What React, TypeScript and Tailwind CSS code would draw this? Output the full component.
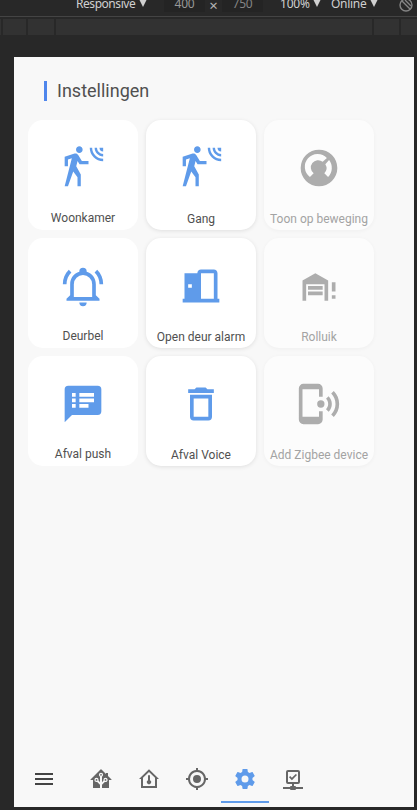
import React from "react";

const walk =
  "M10,0.2C9,0.2 8.2,1 8.2,2C8.2,3 9,3.8 10,3.8C11,3.8 11.8,3 11.8,2C11.8,1 11,0.2 10,0.2M15.67,1A7.33,7.33 0 0,0 23,8.33V7A6,6 0 0,1 17,1H15.67M18.33,1C18.33,3.58 20.42,5.67 23,5.67V4.33C21.16,4.33 19.67,2.84 19.67,1H18.33M21,1A2,2 0 0,0 23,3V1H21M7.92,4.03C7.75,4.03 7.58,4.06 7.42,4.11L2,5.8V11H3.8V7.33L5.91,6.67L2,22H3.8L6.67,13.89L9,17V22H10.8V15.59L8.31,11.05L9.04,8.18L10.12,10H15V8.2H11.38L9.38,4.87C9.08,4.37 8.54,4.03 7.92,4.03Z";
const gauge =
  "M12,2A10,10 0 1,0 12,22A10,10 0 1,0 12,2M7.05,16.95A7,7 0 1,1 16.3,6.5L14,8.55A4,4 0 0,0 9.1,14.9L7.05,16.95M16.95,16.95L14.9,14.9A4,4 0 0,0 15.45,10L17.5,7.7A7,7 0 0,1 16.95,16.95Z";
const bell =
  "M10,21H14A2,2 0 0,1 12,23A2,2 0 0,1 10,21M21,19V20H3V19L5,17V11C5,7.9 7.03,5.17 10,4.29C10,4.19 10,4.1 10,4A2,2 0 0,1 12,2A2,2 0 0,1 14,4C14,4.1 14,4.19 14,4.29C16.97,5.17 19,7.9 19,11V17L21,19M17,11A5,5 0 0,0 12,6A5,5 0 0,0 7,11V18H17V11M19.75,3.19L18.33,4.61C20.04,6.3 21,8.6 21,11H23C23,8.07 21.84,5.25 19.75,3.19M1,11H3C3,8.6 3.96,6.3 5.67,4.61L4.25,3.19C2.16,5.25 1,8.07 1,11Z";
const door =
  "M12,3C10.89,3 10,3.89 10,5H3V19H2V21H22V19H21V5C21,3.89 20.11,3 19,3H12M12,5H19V19H12V5M5,11H7V13H5V11Z";
const garage =
  "M17,20H15V11H5V20H3V9L10,5L17,9V20M6,12H14V14H6V12M6,15H14V17H6V15M19,15V10H21V15H19M19,19V17H21V19H19Z";
const message =
  "M20,2H4A2,2 0 0,0 2,4V22L6,18H20A2,2 0 0,0 22,16V4A2,2 0 0,0 20,2M8,14H6V12H8V14M8,11H6V9H8V11M8,8H6V6H8V8M15,14H10V12H15V14M18,11H10V9H18V11M18,8H10V6H18V8Z";
const trash =
  "M6,19A2,2 0 0,0 8,21H16A2,2 0 0,0 18,19V7H6V19M8,9H16V19H8V9M15.5,4L14.5,3H9.5L8.5,4H5V6H19V4H15.5Z";
const phone =
  "M20.07,4.93C21.88,6.74 23,9.24 23,12C23,14.76 21.88,17.26 20.07,19.07L18.66,17.66C20.11,16.22 21,14.22 21,12C21,9.79 20.11,7.78 18.66,6.34L20.07,4.93M17.24,7.76C18.33,8.85 19,10.35 19,12C19,13.65 18.33,15.15 17.24,16.24L15.83,14.83C16.55,14.11 17,13.11 17,12C17,10.89 16.55,9.89 15.83,9.17L17.24,7.76M13,10A2,2 0 0,1 15,12A2,2 0 0,1 13,14A2,2 0 0,1 11,12A2,2 0 0,1 13,10M11.5,1A2.5,2.5 0 0,1 14,3.5V8H12V4H3V19H12V16H14V20.5A2.5,2.5 0 0,1 11.5,23H3.5A2.5,2.5 0 0,1 1,20.5V3.5A2.5,2.5 0 0,1 3.5,1H11.5Z";

const menu = "M3,6H21V8H3V6M3,11H21V13H3V11M3,16H21V18H3V16Z";
const homeAssistant =
  "M21.8,13H20V21H13V17.67L15.79,14.88L16.5,15C17.66,15 18.6,14.06 18.6,12.9C18.6,11.74 17.66,10.8 16.5,10.8A2.1,2.1 0 0,0 14.4,12.9L14.5,13.61L13,15.13V9.65C13.66,9.29 14.1,8.6 14.1,7.8A2.1,2.1 0 0,0 12,5.7A2.1,2.1 0 0,0 9.9,7.8C9.9,8.6 10.34,9.29 11,9.65V15.13L9.5,13.61L9.6,12.9A2.1,2.1 0 0,0 7.5,10.8A2.1,2.1 0 0,0 5.4,12.9A2.1,2.1 0 0,0 7.5,15L8.21,14.88L11,17.67V21H4V13H2.25C1.83,13 1.42,13 1.42,12.79C1.43,12.57 1.85,12.15 2.28,11.72L11,3C11.33,2.67 11.67,2.33 12,2.33C12.33,2.33 12.67,2.67 13,3L17,7V6H19V9L21.78,11.78C22.18,12.18 22.59,12.59 22.6,12.8C22.6,13 22.2,13 21.8,13M7.5,12A0.9,0.9 0 0,1 8.4,12.9A0.9,0.9 0 0,1 7.5,13.8A0.9,0.9 0 0,1 6.6,12.9A0.9,0.9 0 0,1 7.5,12M16.5,12C17,12 17.4,12.4 17.4,12.9C17.4,13.4 17,13.8 16.5,13.8A0.9,0.9 0 0,1 15.6,12.9A0.9,0.9 0 0,1 16.5,12M12,6.9C12.5,6.9 12.9,7.3 12.9,7.8C12.9,8.3 12.5,8.7 12,8.7C11.5,8.7 11.1,8.3 11.1,7.8C11.1,7.3 11.5,6.9 12,6.9Z";
const homeThermometer =
  "M12,2.3L2,12H4V21H20V12H22L12,2.3M12,5L18,10.8V19H6V10.8L12,5M12,8A1,1 0 0,0 11,9V13.2A2.1,2.1 0 1,0 13,13.2V9A1,1 0 0,0 12,8Z";
const crosshairs =
  "M12,8A4,4 0 0,1 16,12A4,4 0 0,1 12,16A4,4 0 0,1 8,12A4,4 0 0,1 12,8M3.05,13H1V11H3.05C3.5,6.83 6.83,3.5 11,3.05V1H13V3.05C17.17,3.5 20.5,6.83 20.95,11H23V13H20.95C20.5,17.17 17.17,20.5 13,20.95V23H11V20.95C6.83,20.5 3.5,17.17 3.05,13M12,5A7,7 0 0,0 5,12A7,7 0 0,0 12,19A7,7 0 0,0 19,12A7,7 0 0,0 12,5Z";
const cog =
  "M12,15.5A3.5,3.5 0 0,1 8.5,12A3.5,3.5 0 0,1 12,8.5A3.5,3.5 0 0,1 15.5,12A3.5,3.5 0 0,1 12,15.5M19.43,12.97C19.47,12.65 19.5,12.33 19.5,12C19.5,11.67 19.47,11.34 19.43,11L21.54,9.37C21.73,9.22 21.78,8.95 21.66,8.73L19.66,5.27C19.54,5.05 19.27,4.96 19.05,5.05L16.56,6.05C16.04,5.66 15.5,5.32 14.87,5.07L14.5,2.42C14.46,2.18 14.25,2 14,2H10C9.75,2 9.54,2.18 9.5,2.42L9.13,5.07C8.5,5.32 7.96,5.66 7.44,6.05L4.95,5.05C4.73,4.96 4.46,5.05 4.34,5.27L2.34,8.73C2.21,8.95 2.27,9.22 2.46,9.37L4.57,11C4.53,11.34 4.5,11.67 4.5,12C4.5,12.33 4.53,12.65 4.57,12.97L2.46,14.63C2.27,14.78 2.21,15.05 2.34,15.27L4.34,18.73C4.46,18.95 4.73,19.03 4.95,18.95L7.44,17.94C7.96,18.34 8.5,18.68 9.13,18.93L9.5,21.58C9.54,21.82 9.75,22 10,22H14C14.25,22 14.46,21.82 14.5,21.58L14.87,18.93C15.5,18.67 16.04,18.34 16.56,17.94L19.05,18.95C19.27,19.03 19.54,18.95 19.66,18.73L21.66,15.27C21.78,15.05 21.73,14.78 21.54,14.63L19.43,12.97Z";
const network =
  "M15,20A1,1 0 0,0 14,19H13V17H17A2,2 0 0,0 19,15V5A2,2 0 0,0 17,3H7A2,2 0 0,0 5,5V15A2,2 0 0,0 7,17H11V19H10A1,1 0 0,0 9,20H2V22H9A1,1 0 0,0 10,23H14A1,1 0 0,0 15,22H22V20H15M7,15V5H17V15H7M10.9,13.2L8,10.3L9.2,9.1L10.9,10.8L14.8,6.9L16,8.1L10.9,13.2Z";

function Icon({ d, className }: { d: string; className: string }) {
  return (
    <svg viewBox="0 0 24 24" className={className} fill="currentColor" fillRule="evenodd">
      <path d={d} />
    </svg>
  );
}

type Tile = { label: string; icon: string; kind: "flat" | "raised" | "off" };

const tiles: Tile[] = [
  { label: "Woonkamer", icon: walk, kind: "flat" },
  { label: "Gang", icon: walk, kind: "raised" },
  { label: "Toon op beweging", icon: gauge, kind: "off" },
  { label: "Deurbel", icon: bell, kind: "flat" },
  { label: "Open deur alarm", icon: door, kind: "raised" },
  { label: "Rolluik", icon: garage, kind: "off" },
  { label: "Afval push", icon: message, kind: "flat" },
  { label: "Afval Voice", icon: trash, kind: "raised" },
  { label: "Add Zigbee device", icon: phone, kind: "off" },
];

const cardStyle = {
  flat: "bg-white text-[#5f9bea] pb-1",
  raised: "bg-white text-[#5f9bea] pb-[3px] shadow-[0_1px_4px_rgba(0,0,0,0.1)]",
  off: "bg-[#fcfcfc] text-[#adadad] pb-[3px] shadow-[0_1px_4px_rgba(0,0,0,0.04)]",
};

const tabs = [homeAssistant, homeThermometer, crosshairs, cog, network];

function DeviceToolbar() {
  return (
    <div className="h-4 overflow-hidden text-[12px] leading-4 text-[#d0d0d0]">
      <div className="-mt-1 flex h-4 items-center pl-[76px] whitespace-nowrap *:shrink-0">
        <span className="w-[63px] tracking-[-0.45px]">Responsive</span>
        <Arrow />
        <span className="ml-[17px] w-[41px] bg-[#242424] text-center tracking-[-0.2px] text-[#989898]">400</span>
        <span className="w-[17px] pt-[2px] text-center text-[15px] text-[#b5b5b5]">×</span>
        <span className="w-[41px] bg-[#242424] text-center tracking-[-0.2px] text-[#858585]">750</span>
        <span className="ml-[17px] w-[33px] tracking-[-0.2px]">100%</span>
        <Arrow />
        <span className="ml-[10px] w-[39px] tracking-[-0.3px]">Online</span>
        <Arrow />
        <svg viewBox="0 0 14 14" className="mt-px ml-[21px] size-[14px]" fill="none" stroke="#858585" strokeWidth="1.4">
          <circle cx="7" cy="7" r="6" />
          <path d="M3 3L11 11M6 2L12 8" />
        </svg>
      </div>
    </div>
  );
}

function Arrow() {
  return (
    <svg viewBox="0 0 8 7" className="-mt-px h-[7px] w-2" fill="#d0d0d0">
      <path d="M0.5 0H7.5L4 7Z" />
    </svg>
  );
}

export default function App() {
  return (
    <div className="flex h-[810px] w-[417px] flex-col overflow-hidden bg-[#282828] font-['Noto_Sans',sans-serif]">
      <DeviceToolbar />
      <div className="h-px bg-[#444444]" />
      <div className="mt-[2px] flex h-4 gap-[2px] *:bg-[#323232]">
        <div className="w-px" />
        <div className="w-[23px]" />
        <div className="w-[26px]" />
        <div className="w-[316px]" />
        <div className="w-[25px]" />
        <div className="flex-1" />
      </div>
      <main className="mt-[22px] ml-[14px] flex h-[750px] w-[400px] flex-col bg-[#f8f8f8] font-['Roboto',sans-serif]">
        <h1 className="mt-6 ml-[30px] flex h-5 items-center border-l-[3px] border-[#4f86ec] pl-[10px] text-[18px] leading-5 text-[#505050]">
          Instellingen
        </h1>
        <div className="mt-[19px] ml-[14px] grid w-[346px] grid-cols-3 gap-2">
          {tiles.map((t) => (
            <div key={t.label} className={`flex h-[110px] flex-col items-center justify-between rounded-[15px] pt-[26px] ${cardStyle[t.kind]}`}>
              <Icon d={t.icon} className="size-11 shrink-0" />
              <span
                className={`text-[12px] leading-[15px] whitespace-nowrap ${t.kind === "off" ? "text-[#a3a3a3]" : "text-[#505050]"}`}
              >
                {t.label}
              </span>
            </div>
          ))}
        </div>
        <nav className="mt-auto mb-1 flex h-12 items-stretch">
          <button className="mr-[3px] flex w-[60px] items-center justify-center text-[#444444]">
            <Icon d={menu} className="size-6" />
          </button>
          {tabs.map((d) => (
            <button
              key={d}
              className={`flex w-12 items-center justify-center border-b-2 pt-[2px] ${d === cog ? "border-[#5f9bea] text-[#5f9bea]" : "border-transparent text-[#666666]"}`}
            >
              <Icon d={d} className="size-6" />
            </button>
          ))}
        </nav>
      </main>
    </div>
  );
}
